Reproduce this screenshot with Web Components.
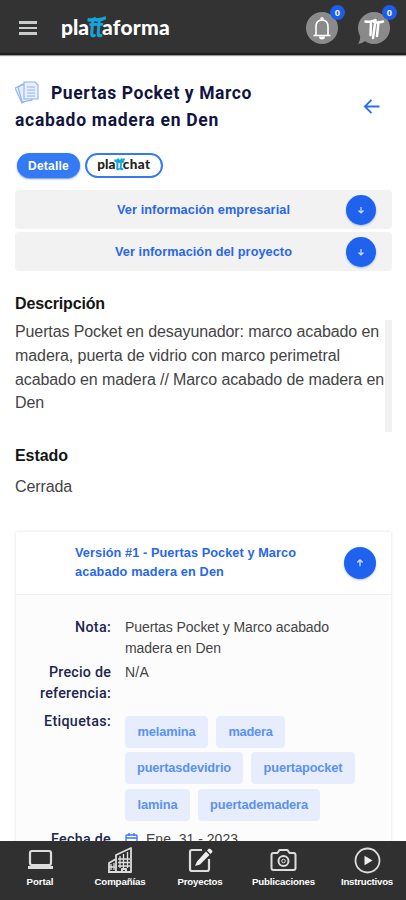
<!DOCTYPE html>
<html lang="es">
<head>
<meta charset="utf-8">
<title>Plattaforma</title>
<style>
html,body{margin:0;height:100%;overflow:hidden;background:#fff;font-family:"Liberation Sans",Arial,sans-serif}
</style>
</head>
<body>
<platt-app></platt-app>
<script>
const define=(name,html,after)=>customElements.define(name,class extends HTMLElement{
  connectedCallback(){
    if(this.shadowRoot)return;
    const t=document.createElement('template');
    t.innerHTML=typeof html==='function'?html(this):html;
    this.attachShadow({mode:'open'}).append(t.content.cloneNode(true));
    if(after)after(this);
  }
});

/* Brand wordmark: dark or white letters around a blue brush-stroke "tt". */
define('brand-logo',`<style>
:host{display:flex;align-items:baseline;color:var(--ink,#fff);font:900 var(--size,21px)/1 Lato,sans-serif;height:var(--h,24px)}
.tt{position:relative;color:#13a4dc;transform:skewX(-4deg) scaleY(1.3);transform-origin:50% 55%}
svg{position:absolute;left:-18%;top:12%;width:140%;height:22%;overflow:visible}
</style><span><slot name="pre"></slot></span><span class="tt"><slot name="tt"></slot><svg viewBox="0 0 20 4" preserveAspectRatio="none"><path d="M0 2Q5 3 9 1.4M7 2Q14 3 20 .8" fill="none" stroke="#13a4dc" stroke-width="2.4"/></svg></span><span><slot name="post"></slot></span>`);

define('count-badge','<style>:host{position:absolute;right:-7px;top:-7px;width:15px;height:15px;border-radius:50%;background:#1c5eea;color:#fff;font:700 9.5px/15px "Liberation Sans",sans-serif;text-align:center}</style><slot></slot>');

define('top-bar',`<style>
:host{display:flex;align-items:center;height:53px;padding:0 16px 0 19px;background:#333;border-bottom:2px solid #1d1d1d;box-shadow:0 1px 1px #999;flex:none}
.menu{display:flex;flex-direction:column;gap:3px;width:18px;margin-top:3px}
.menu i{height:2.6px;background:#c9cccc}
brand-logo{margin:3px 0 0 24px}
.r{display:flex;gap:20px;margin:3px 0 0 auto}
.b{position:relative;width:32px;height:32px}
svg{display:block;width:32px;height:32px;overflow:visible}
</style>
<div class="menu"><i></i><i></i><i></i></div>
<brand-logo><text-line slot="pre" span="28">pla</text-line><text-line slot="tt" span="14">tt</text-line><text-line slot="post" span="68">aforma</text-line></brand-logo>
<div class="r"><div class="b"><svg viewBox="0 0 32 32"><circle cx="16" cy="16" r="16" fill="#8a8a8a"/><g fill="none" stroke="#fff" stroke-width="1.6"><path d="M10 23V15Q10 8 16 8T22 15V23M7.5 23.5H24.5"/></g><path d="M13 24.5a3 3 0 0 0 6 0z" fill="#fff"/><circle cx="16" cy="6.8" r="1.8" fill="#eee"/></svg><count-badge>0</count-badge></div>
<div class="b"><svg viewBox="0 0 32 32"><circle cx="16" cy="16" r="16" fill="#8a8a8a"/><path d="M2 20Q3 28 0 32Q5 31 9 28Z" fill="#8a8a8a"/><path d="M7.5 9.5Q12 10.5 16 8.5M16 10Q20 11 25 9.5M13 9.5L12.5 23M17.5 8L15 26M20.5 10L19 24" fill="none" stroke="#fff" stroke-width="2.5" stroke-linecap="round"/></svg><count-badge>0</count-badge></div></div>`);

define('arrow-disc',el=>`<style>:host{display:block;width:var(--d,30px);height:var(--d,30px);border-radius:50%;background:#1e62ee;box-shadow:0 1px 2px #1e62ee66}svg{display:block;width:100%;height:100%;${el.hasAttribute('up')?'transform:rotate(180deg)':''}}</style><svg viewBox="0 0 30 30"><path d="M15 12V18M12.5 15.5L15 18L17.5 15.5" stroke="#d5e2ff" stroke-width="1.2" fill="none"/></svg>`);

define('fold-row',`<style>:host{display:grid;grid-template-columns:1fr auto;align-items:center;height:39px;padding-right:16px;border-radius:4px;background:#f2f2f2;color:#2867ea;font:700 12.7px/16px "Liberation Sans",sans-serif}div{padding-left:var(--pad)}</style><div><slot></slot></div><arrow-disc></arrow-disc>`);

define('tag-chip','<style>:host{display:flex;align-items:center;justify-content:center;height:32px;border-radius:4px;background:#e7edfd;color:#5a92f2;font:700 12.8px/16px "Liberation Sans",sans-serif}</style><slot></slot>');

define('detail-row',`<style>:host{display:grid;grid-template-columns:95px 1fr;column-gap:14px;font-size:14px;line-height:21px;color:#444}
.l{display:flex;flex-direction:column;align-items:flex-end;color:#22264f;font:500 14.3px/21px Roboto,sans-serif}</style><div class="l"><slot name="label"></slot></div><div><slot></slot></div>`);

define('version-card',`<style>
:host{display:block;border:1px solid #f3f3f3;border-radius:4px 4px 0 0;background:#fcfcfd;box-shadow:0 0 3px #eee;height:330px}
header{box-sizing:border-box;height:63px;display:flex;align-items:center;justify-content:space-between;padding:0 15px 0 59px;background:#fff;border-bottom:1px solid #f1f1f1;color:#2867ea;font:700 12.7px/19px "Liberation Sans",sans-serif}
.rows{padding-top:22px}
.chips{display:flex;flex-direction:column;gap:4.5px;padding-top:4.5px}
.chips div{display:flex;gap:8px}
.date{display:flex;gap:8px;align-items:center}
detail-row.e{margin-top:7px}detail-row.p{margin-top:3px}detail-row.f{margin-top:8px}
</style>
<header><div><text-line span="221">Versión #1 - Puertas Pocket y Marco</text-line><text-line span="149">acabado madera en Den</text-line></div><arrow-disc up style="--d:32px"></arrow-disc></header>
<div class="rows">
<detail-row><text-line slot="label" span="36">Nota:</text-line><text-line span="204">Puertas Pocket y Marco acabado</text-line><text-line span="96">madera en Den</text-line></detail-row>
<detail-row class="p"><text-line slot="label" span="62">Precio de</text-line><text-line slot="label" span="71">referencia:</text-line><text-line span="24">N/A</text-line></detail-row>
<detail-row class="e"><text-line slot="label" span="67">Etiquetas:</text-line><div class="chips">
<div><tag-chip style="width:83px"><text-line span="58">melamina</text-line></tag-chip><tag-chip style="width:69px"><text-line span="44">madera</text-line></tag-chip></div>
<div><tag-chip style="width:118px"><text-line span="94">puertasdevidrio</text-line></tag-chip><tag-chip style="width:104px"><text-line span="79">puertapocket</text-line></tag-chip></div>
<div><tag-chip style="width:65px"><text-line span="40">lamina</text-line></tag-chip><tag-chip style="width:122px"><text-line span="98">puertademadera</text-line></tag-chip></div></div></detail-row>
<detail-row class="f"><text-line slot="label" span="60">Fecha de</text-line><div class="date"><svg width="13" height="13" viewBox="0 0 13 13" fill="none" stroke="#3974ec" stroke-width="1.3"><rect x="1" y="2" width="11" height="10" rx="1"/><path d="M1 5H12M4 0V3M9 0V3"/></svg><text-line span="92">Ene. 31 - 2023</text-line></div></detail-row>
</div>`);

const icons={
laptop:'<rect x="4" y="4" width="21" height="14" rx="2" stroke-width="2.2"/><path d="M2 20.5H27" stroke-width="3"/>',
city:'<path d="M3 25V16L10 12V25M10 12V8L25 1V25H2" stroke-width="1.8"/><path d="M14 9V21M17.5 7V21M21.5 5V21M12 12H24M12 15.5H24M12 19H24M5 17V23M8 16V23M3 20H9" stroke-width="1.3"/><path d="M16 25V22H20V25" stroke-width="2"/>',
edit:'<path d="M16 3H6Q4 3 4 5V22Q4 24 6 24H21Q23 24 23 22V12" stroke-width="2.2"/><path d="M9 19L11 14.5L20 4.5L23.5 8L14 17.5ZM21 3.5L22.5 2Q23.5 1 24.5 2L26 3.5Q27 4.5 26 5.5L24.5 7Z" fill="#eee" stroke="none"/>',
camera:'<path d="M2.5 8Q2.5 6 4.5 6H8.5L10.5 3H18.5L20.5 6H24.500Q26.500 6 26.500 8V21Q26.500 23 24.500 23H4.500Q2.500 23 2.500 21Z" stroke-width="2"/><circle cx="14.5" cy="14" r="5" stroke-width="2"/><circle cx="14.5" cy="14" r="1.8" stroke-width="1"/>',
play:'<circle cx="14.5" cy="13.5" r="12" stroke-width="1.8"/><path d="M11.5 8.800L19.500 13.500L11.500 18.200Z" fill="#eee" stroke="none"/>'};
define('nav-item',el=>`<style>:host{display:flex;flex-direction:column;align-items:center;color:#fff;font:700 9.7px/14px "Liberation Sans",sans-serif}svg{width:29px;height:27px;margin-bottom:1px}</style><svg viewBox="0 0 29 27" fill="none" stroke="#ddd" stroke-linejoin="round">${icons[el.getAttribute('icon')]}</svg><slot></slot>`);

define('bottom-nav',`<style>:host{position:absolute;left:0;right:0;bottom:0;box-sizing:border-box;height:59px;display:grid;grid-template-columns:80px 80px 80px 87px 80px;padding-top:6px;background:#303030}</style>
<nav-item icon="laptop"><text-line span="27">Portal</text-line></nav-item><nav-item icon="city"><text-line span="51">Compañías</text-line></nav-item><nav-item icon="edit"><text-line span="45">Proyectos</text-line></nav-item><nav-item icon="camera"><text-line span="63">Publicaciones</text-line></nav-item><nav-item icon="play"><text-line span="52">Instructivos</text-line></nav-item>`);

define('platt-app',`<style>
:host{position:relative;display:flex;flex-direction:column;width:406px;height:900px;overflow:hidden;background:#fff;font-family:"Liberation Sans",Arial,sans-serif;color:#444}
main{padding:25px 14px 0 15px}
.title{display:flex;justify-content:space-between;height:54px;color:#11143f;font:700 17.5px/27px Roboto,sans-serif}
.first{display:flex;gap:12px}
.back{margin:18px 12px 0 0}
.tabs{display:flex;gap:5px;margin:19px 0 0 2px}
.tabs>div{box-sizing:border-box;height:25px;border-radius:13px;display:flex;align-items:center;justify-content:center}
.on{width:63px;background:#347af5;color:#fff;font:700 12px/20px "Liberation Sans",sans-serif;box-shadow:0 1px 2px #6b91d3}
.chat{width:78px;border:2px solid #347af5}
.folds{display:grid;gap:3px;margin-top:12px}
h3{margin:0;font:700 16px/20px "Liberation Sans",sans-serif;color:#151515}
.desc{display:flex;justify-content:space-between;height:112px;margin-top:6px;font-size:16px;line-height:23.8px}
.bar{width:7px;background:#f1f1f1}
.state{margin:10px 0 33px;font-size:16px;line-height:22px}
</style>
<top-bar></top-bar>
<main>
<div class="title"><div><div class="first"><svg width="24" height="24" viewBox="0 0 24 24" fill="#e8f0ff" stroke="#8db2f4" stroke-width="1.1"><path d="M0 8L8 4L14 19L7 23Z"/><path d="M3 7L12 3L17 20L7 22Z"/><path d="M9 2H20L23 5V19H9Z"/><path d="M12 7H20M12 10H20M12 13H20M12 16H20"/></svg><text-line span="201">Puertas Pocket y Marco</text-line></div><text-line span="204">acabado madera en Den</text-line></div>
<svg class="back" width="17" height="17" viewBox="0 0 18 18" fill="none" stroke="#2d70ed" stroke-width="2"><path d="M17.5 9H2M9 2L2 9L9 16"/></svg></div>
<div class="tabs"><div class="on"><text-line span="41">Detalle</text-line></div><div class="chat"><brand-logo style="--ink:#222;--size:13.5px;--h:16px"><text-line slot="pre" span="18">pla</text-line><text-line slot="tt" span="8">tt</text-line><text-line slot="post" span="28">chat</text-line></brand-logo></div></div>
<div class="folds"><fold-row style="--pad:102px"><text-line span="173">Ver información empresarial</text-line></fold-row><fold-row style="--pad:100px"><text-line span="177">Ver información del proyecto</text-line></fold-row></div>
<h3 style="margin-top:23px"><text-line span="90">Descripción</text-line></h3>
<div class="desc"><div><text-line span="364">Puertas Pocket en desayunador: marco acabado en</text-line><text-line span="325">madera, puerta de vidrio con marco perimetral</text-line><text-line span="369">acabado en madera // Marco acabado de madera en</text-line><text-line span="29">Den</text-line></div><div class="bar"></div></div>
<h3 style="margin-top:14px"><text-line span="53">Estado</text-line></h3>
<div class="state"><text-line span="57">Cerrada</text-line></div>
<version-card></version-card>
</main>
<bottom-nav></bottom-nav>`);

/* One line of text, tracked so that it spans the width in its "span" attribute. */
define('text-line','<style>:host{display:block;white-space:nowrap}span{display:inline-block;white-space:pre}</style><span><slot></slot></span>',el=>{
  const s=el.shadowRoot.querySelector('span'),n=el.textContent.length;
  const w=s.getBoundingClientRect().width;
  if(w)s.style.letterSpacing=((+el.getAttribute('span')-w)/n).toFixed(3)+'px';
});
// Lines inside templates upgrade with their parents; slotted ones are measured once more when laid out.
const refit=root=>root.querySelectorAll('*').forEach(e=>{
  if(e.localName==='text-line'){
    const s=e.shadowRoot.querySelector('span');
    s.style.letterSpacing='0';
    s.style.letterSpacing=((+e.getAttribute('span')-s.getBoundingClientRect().width)/e.textContent.length).toFixed(3)+'px';
  }
  if(e.shadowRoot)refit(e.shadowRoot);
});
refit(document);
</script>
</body>
</html>
